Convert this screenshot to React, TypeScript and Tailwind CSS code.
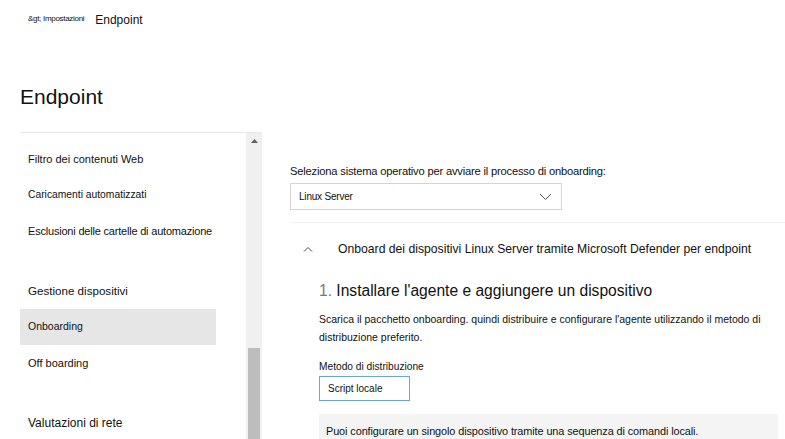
import React from 'react'

const NAV_ITEMS = [
  { label: 'Filtro dei contenuti Web', size: 'text-[11px]' },
  { label: 'Caricamenti automatizzati', size: 'text-[10.3px]' },
  { label: 'Esclusioni delle cartelle di automazione', size: 'text-[11px] tracking-[-0.2px]' },
  { spacer: true },
  { label: 'Gestione dispositivi', size: 'text-[11.6px]' },
  { label: 'Onboarding', size: 'text-[10.5px]', active: true },
  { label: 'Off boarding', size: 'text-[11px]' },
  { spacer: true },
  { label: 'Valutazioni di rete', size: 'text-[12px]' },
]

const ChevronDown = () => (
  <svg width="13" height="8" viewBox="0 0 13 8" fill="none">
    <polyline points="1,1 6.5,6.5 12,1" stroke="#555" strokeWidth="1" />
  </svg>
)

const ChevronUp = () => (
  <svg width="10" height="6" viewBox="0 0 10 6" fill="none">
    <polyline points="1,5.5 5,1.5 9,5.5" stroke="#444" strokeWidth="1" />
  </svg>
)

export default function App() {
  return (
    <div
      className="w-[785px] h-[439px] overflow-hidden bg-white text-[#111] flex flex-col"
      style={{ fontFamily: '"Liberation Sans", Arial, sans-serif' }}
    >
      {/* breadcrumb */}
      <div className="flex items-end h-[27px] pl-[28px] gap-[11px]">
        <span className="text-[8px] leading-none mb-[4px] tracking-[-0.3px]">&amp;gt; Impostazioni</span>
        <span className="text-[12px] leading-none mb-[1px]">Endpoint</span>
      </div>

      {/* page title */}
      <h1 className="text-[21px] leading-none pl-[20px] mt-[59px] h-[46px]">Endpoint</h1>

      <div className="flex flex-1 min-h-0">
        {/* left nav */}
        <div className="ml-[20px] w-[242px] border-t border-[#e8e8e8] flex">
          <div className="w-[226px] pt-[8px] flex flex-col">
            {NAV_ITEMS.map((item, i) =>
              item.spacer ? (
                <div key={i} className="h-[24px] shrink-0" />
              ) : (
                <div
                  key={i}
                  className={`h-[36px] shrink-0 flex items-center pl-[8px] ${item.size} ${item.active ? 'bg-[#e6e6e6] w-[196px]' : ''}`}
                >
                  {item.label}
                </div>
              )
            )}
          </div>
          {/* scrollbar */}
          <div className="w-[16px] bg-[#f0f0f0] flex flex-col items-center">
            <div className="h-[16px] flex items-center justify-center">
              <svg width="7" height="4" viewBox="0 0 7 4">
                <polygon points="0,4 3.5,0 7,4" fill="#606060" />
              </svg>
            </div>
            <div className="h-[199px]" />
            <div className="w-[12px] flex-1 bg-[#bdbdbd]" />
          </div>
        </div>

        {/* right content */}
        <div className="flex-1 pl-[28px] pt-[34px]">
          <div className="text-[11.2px] tracking-[-0.2px] leading-none">
            Seleziona sistema operativo per avviare il processo di onboarding:
          </div>
          <div className="mt-[6px] w-[272px] h-[27px] border border-[#d4d4d4] flex items-center justify-between pl-[8px] pr-[9px]">
            <span className="text-[10px] tracking-[-0.2px]">Linux Server</span>
            <ChevronDown />
          </div>
          <div className="mt-[12px] border-t border-[#efefef]" />

          <div className="flex items-center h-[52px] pl-[13px]">
            <ChevronUp />
            <span className="ml-[25px] text-[12.2px]">
              Onboard dei dispositivi Linux Server tramite Microsoft Defender per endpoint
            </span>
          </div>

          <div className="pl-[29px] w-[490px]">
            <div className="text-[15.6px] leading-none mt-[8px]">
              <span className="text-[#777]">1. </span>Installare l'agente e aggiungere un dispositivo
            </div>
            <p className="mt-[11px] text-[10.5px] leading-[18px]">
              Scarica il pacchetto onboarding. quindi distribuire e configurare l'agente utilizzando il metodo di distribuzione preferito.
            </p>
            <div className="mt-[16px] text-[10.2px] leading-none">Metodo di distribuzione</div>
            <div className="mt-[4px] w-[91px] h-[25px] border border-[#6aa6db] flex items-center pl-[8px] text-[10px]">
              Script locale
            </div>
            <div className="mt-[13px] w-[459px] h-[40px] bg-[#f4f4f4] pl-[7px] pt-[12px] text-[10.9px] tracking-[-0.1px] leading-none">
              Puoi configurare un singolo dispositivo tramite una sequenza di comandi locali.
            </div>
          </div>
        </div>
      </div>
    </div>
  )
}
